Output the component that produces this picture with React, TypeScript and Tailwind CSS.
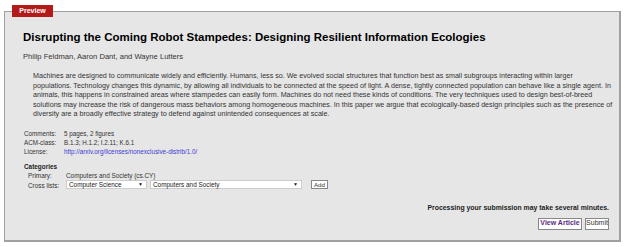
import React from 'react';

const sans = { fontFamily: '"Liberation Sans", Arial, sans-serif' };

const abstractLines = [
  'Machines are designed to communicate widely and efficiently. Humans, less so. We evolved social structures that function best as small subgroups interacting within larger',
  'populations. Technology changes this dynamic, by allowing all individuals to be connected at the speed of light. A dense, tightly connected population can behave like a single agent. In',
  'animals, this happens in constrained areas where stampedes can easily form. Machines do not need these kinds of conditions. The very techniques used to design best-of-breed',
  'solutions may increase the risk of dangerous mass behaviors among homogeneous machines. In this paper we argue that ecologically-based design principles such as the presence of',
  'diversity are a broadly effective strategy to defend against unintended consequences at scale.',
];

export default function App() {
  return (
    <div className="h-[247px] w-[625px] bg-white" style={sans}>
      <div className="relative px-[4px] pt-[11px]">
        <div className="absolute left-[12px] top-[5px] flex h-[12px] w-[41px] items-center justify-center bg-[#b31b1b] text-[7px] font-bold text-white">
          Preview
        </div>
        <div className="h-[231px] border border-b-2 border-r-2 border-[#a0a0a0] bg-[#e6e6e6] pl-[18px] pr-[10px] pt-[18px]">
          <h1 className="text-[11.5px] font-bold leading-[15px] text-black">
            Disrupting the Coming Robot Stampedes: Designing Resilient Information Ecologies
          </h1>
          <p className="mt-[7px] text-[7.6px] leading-[10px] text-[#333]">Philip Feldman, Aaron Dant, and Wayne Lutters</p>

          <div className="mt-[10px] pl-[10px] text-[7.15px] leading-[9.5px] text-[#333]">
            {abstractLines.map((line) => (
              <div key={line} className="whitespace-nowrap">{line}</div>
            ))}
          </div>

          <div className="mt-[9px] grid grid-cols-[40px_1fr] pl-[1px] text-[6.3px] leading-[9px] text-[#333]">
            <span>Comments:</span>
            <span>5 pages, 2 figures</span>
            <span>ACM-class:</span>
            <span>B.1.3; H.1.2; I.2.11; K.6.1</span>
            <span>License:</span>
            <span className="text-[#3b3bd6]">http://arxiv.org/licenses/nonexclusive-distrib/1.0/</span>
          </div>

          <div className="mt-[6px] pl-[1px] text-[6.4px] font-bold leading-[9px] text-[#222]">Categories</div>
          <div className="grid grid-cols-[38px_1fr] pl-[5px] text-[6.4px] leading-[9px] text-[#333]">
            <span>Primary:</span>
            <span>Computers and Society (cs.CY)</span>
            <span className="mt-[1px]">Cross lists:</span>
            <div className="flex items-center">
              <div className="flex h-[9px] w-[81px] items-center justify-between border border-[#ccc] bg-white pl-[2px] pr-[3px] text-[#222]">
                <span>Computer Science</span>
                <span className="text-[5px]">▼</span>
              </div>
              <div className="ml-[3px] flex h-[9px] w-[152px] items-center justify-between border border-[#ccc] bg-white pl-[2px] pr-[3px] text-[#222]">
                <span>Computers and Society</span>
                <span className="text-[5px]">▼</span>
              </div>
              <div className="ml-[9px] flex h-[9px] w-[17px] items-center justify-center border border-[#888] bg-white text-[6.2px] text-[#333]">
                Add
              </div>
            </div>
          </div>

          <div className="mt-[13px] text-right text-[6.9px] font-bold leading-[9px] text-[#222]">
            Processing your submission may take several minutes.
          </div>
          <div className="mt-[6px] flex justify-end gap-[3px]">
            <div className="flex h-[12px] w-[44px] items-center justify-center border border-[#888] bg-white text-[7px] font-bold text-[#5b2a86]">
              View Article
            </div>
            <div className="flex h-[12px] w-[24px] items-center justify-center border border-[#888] bg-white text-[7px] text-[#333]">
              Submit
            </div>
          </div>
        </div>
      </div>
    </div>
  );
}
